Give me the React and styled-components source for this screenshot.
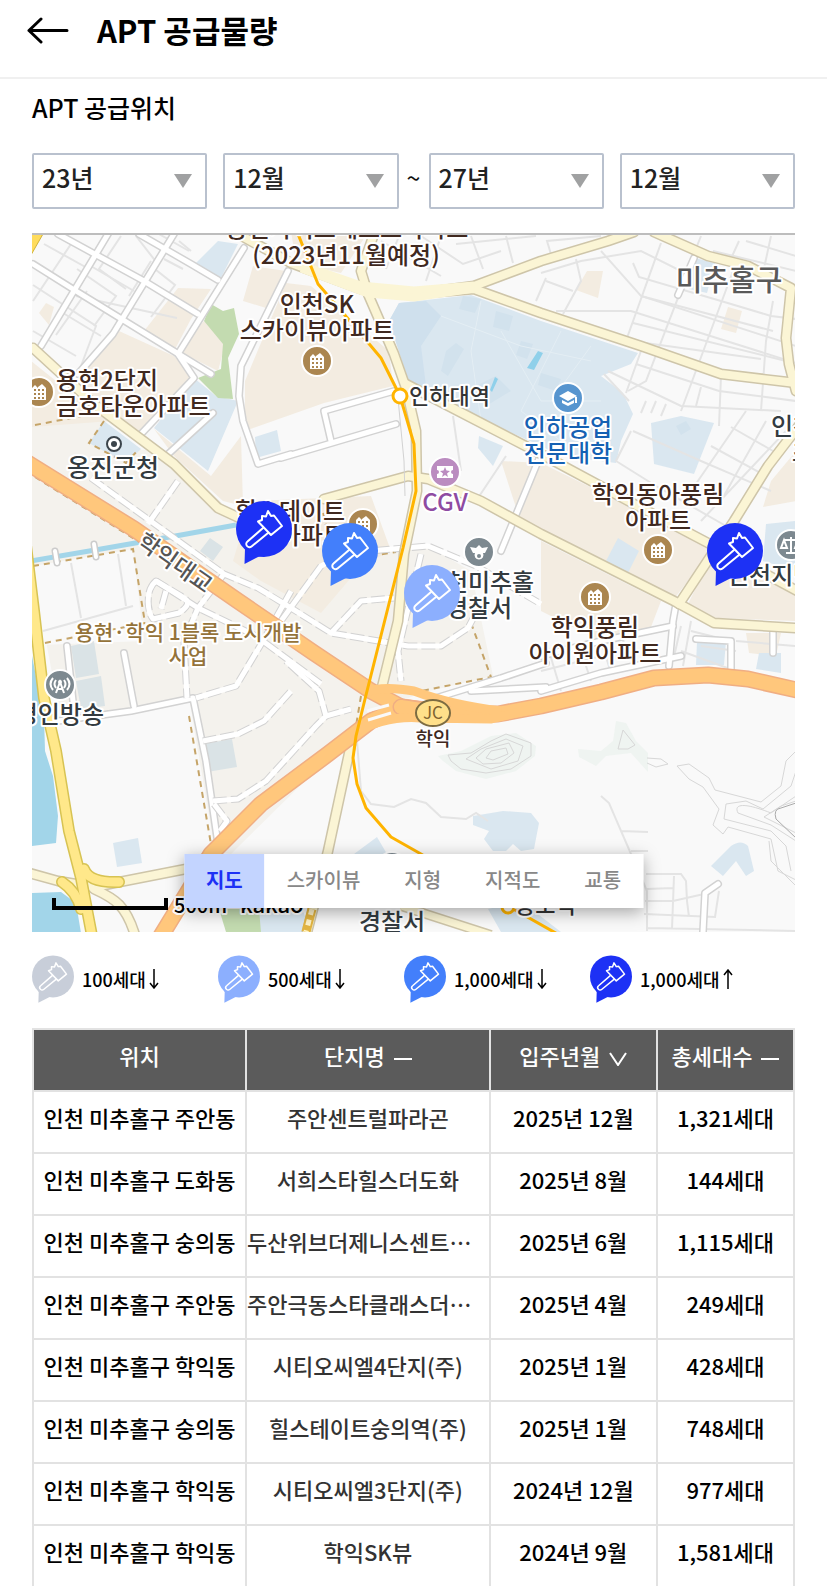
import React from "react";
import styled, { createGlobalStyle, css } from "styled-components";

const GlobalStyle = createGlobalStyle`
  *, *::before, *::after { box-sizing: border-box; }
  body {
    margin: 0;
    background: #fff;
    color: #111;
    font-family: "Noto Sans CJK KR", "Noto Sans", sans-serif;
  }
  button, select { font-family: inherit; }
`;

const Header = styled.header`
  display: flex;
  align-items: center;
  gap: 27px;
  padding: 0 27px 17px;
  height: 79px;
  border-bottom: 2px solid #f0f0f0;
`;

const BackButton = styled.button`
  display: flex;
  width: 43px;
  height: 28px;
  padding: 0;
  border: 0;
  background: none;
`;

const PageTitle = styled.h1`
  margin: 0;
  font-size: 31px;
  line-height: 58px;
  font-weight: 700;
  color: #000;
`;

const Main = styled.main`
  padding: 12px 32px 0;
`;

const SectionTitle = styled.h2`
  margin: 0 0 30px;
  font-size: 25px;
  line-height: 32px;
  font-weight: 500;
  color: #000;
`;

const Filters = styled.form`
  display: flex;
  align-items: center;
  margin-bottom: 24px;
`;

const SelectPair = styled.div`
  display: flex;
  flex: 1;
  gap: 16px;
`;

const Tilde = styled.span`
  width: 30px;
  padding-bottom: 8px;
  text-align: center;
  font-size: 25px;
  line-height: 32px;
`;

const SelectBox = styled.label`
  display: grid;
  flex: 1;
  align-items: center;

  & > * { grid-area: 1 / 1; }
  svg {
    justify-self: end;
    margin-right: 15px;
    pointer-events: none;
  }
`;

const Select = styled.select`
  appearance: none;
  width: 100%;
  height: 56px;
  padding: 0 8px 8px;
  border: 2px solid #b9c1ce;
  border-radius: 2px;
  background: #fff;
  color: #222;
  font-size: 25px;
  font-weight: 500;
`;

const MapFrame = styled.section`
  position: relative;
  aspect-ratio: 763 / 699;
  border-top: 2px solid #bdbdbd;
  overflow: hidden;
`;

const MapDrawing = styled.svg`
  display: block;
  width: 100%;
  height: 100%;
  text {
    font-family: "Noto Sans CJK KR", sans-serif;
    stroke: #fff;
    stroke-width: 4px;
    stroke-linejoin: round;
    paint-order: stroke;
  }
`;

const PinSpot = styled.button`
  position: absolute;
  left: ${(p) => ((p.$x - 31) / 763) * 100}%;
  top: ${(p) => ((p.$y - 234) / 697) * 100}%;
  margin: -28px 0 0 -28px;
  padding: 0;
  border: 0;
  background: none;
  line-height: 0;
`;

const MapTabs = styled.nav`
  position: absolute;
  left: 50%;
  bottom: 24px;
  transform: translateX(-50%);
  display: flex;
  background: #fff;
  box-shadow: 0 4px 16px rgba(0, 0, 0, 0.35);
`;

const MapTab = styled.button`
  height: 54px;
  padding: 0 22px 4px;
  border: 0;
  background: #fff;
  color: #888;
  font-size: 20px;
  font-weight: 500;
  white-space: nowrap;
  ${(p) =>
    p.$active &&
    css`
      background: #c3d4ff;
      color: #1d31f5;
      font-weight: 700;
    `}
`;

const Legend = styled.ul`
  display: grid;
  grid-template-columns: repeat(4, 186px);
  margin: 23px 0 25px;
  padding: 0;
  list-style: none;
`;

const LegendItem = styled.li`
  display: flex;
  align-items: center;
  gap: 8px;
  height: 48px;
  font-size: 18px;
  font-weight: 500;
  color: #000;
  white-space: nowrap;
`;

const LegendText = styled.span`
  display: flex;
  align-items: center;
  gap: 3px;
`;

const Table = styled.table`
  width: 100%;
  table-layout: fixed;
  border-collapse: collapse;
  font-size: 22px;
`;

const HeadCell = styled.th`
  height: 62px;
  padding: 0 0 10px;
  border: 2px solid #e2e2e2;
  background: #5b5b5b;
  color: #fff;
  font-weight: 500;
  white-space: nowrap;
  svg { margin-left: 9px; vertical-align: -1px; }
`;

const Cell = styled.td`
  height: 62px;
  padding: 0 0 10px;
  border: 2px solid #e2e2e2;
  text-align: center;
  font-weight: 500;
  color: #000;
  white-space: nowrap;
`;

const NameCell = styled(Cell)`
  color: #333;
  text-align: ${(p) => (p.$cut ? "left" : "center")};
`;

function Pin({ color, size = 56 }) {
  return (
    <svg width={size} height={size === 56 ? 63 : 48} viewBox="0 0 56 63" aria-hidden="true">
      <circle cx="28" cy="28" r="28" fill={color} />
      <path d="M9 47 L8.500 63 L26 54 Z" fill={color} />
      <g fill="none" stroke="#fff" strokeWidth="2" strokeLinejoin="round" strokeLinecap="round">
        <path d="M32 10 L35 15 L38 14.500 L46 25 L35 34 L22 20.500 L26 19 L26 15 L30 15.500 Z" />
        <path d="M27 27 L11.500 40.500 A3 3 0 0 0 15.500 45.500 L32 32" />
      </g>
    </svg>
  );
}

const ring = { stroke: "#fff", strokeWidth: 2 };

function Apartment({ x, y }) {
  return (
    <g transform={`translate(${x} ${y})`}>
      <circle r="15" fill="#ab8650" {...ring} />
      <path d="M-7 8 V-4 L-4 -7 L-1 -4 V-5 L3 -8 L7 -4 V8 Z" fill="#fff" />
      <path d="M-4 -3 V7 M0 -3 V7 M4 -3 V7" stroke="#ab8650" strokeWidth="2" strokeDasharray="2 2" />
    </g>
  );
}

function Label({ x, y, size = 24, color = "#40291f", weight = 500, anchor = "middle", children, ...rest }) {
  return (
    <text x={x} y={y} fontSize={size} fill={color} fontWeight={weight} textAnchor={anchor} {...rest}>
      {children}
    </text>
  );
}

function Roads({ lines, color, edge, width }) {
  return (
    <g fill="none" strokeLinejoin="round" strokeLinecap="round">
      <g stroke={edge} strokeWidth={width + 3}>
        {lines.map((d) => <path key={d} d={d} />)}
      </g>
      <g stroke={color} strokeWidth={width}>
        {lines.map((d) => <path key={d} d={d} />)}
      </g>
    </g>
  );
}

const streets = [
  "M32 284 L95 325 L77 373", "M43 243 L88 268 L60 312", "M32 300 L72 240", "M75 295 L176 317", "M88 264 L133 290",
  "M120 235 L98 268 L125 288", "M135 235 L156 262 L134 300", "M158 233 L188 250 M150 265 L174 284 L150 316", "M32 330 L75 355 M62 312 L100 335",
  "M95 250 L125 270 M76 268 L115 295 L93 325 M55 334 L86 290", "M178 240 L190 250 M163 258 L182 268", "M150 260 L128 295",
  "M380 240 L440 275 M398 235 L385 268 M420 235 L462 263 L500 250 M440 235 L425 280 M470 235 L482 268 M505 235 L512 262 M455 243 L535 235",
  "M540 272 L580 260 L640 250 L700 280 M552 260 L546 240 L600 235", "M545 277 L535 300 M575 258 L580 280 L562 313 M600 250 L640 295 L795 345",
  "M545 280 L572 290 M555 310 L630 310 L795 362", "M632 262 L638 276 L720 300 L770 315 L795 318", "M660 242 L626 337 M695 250 L645 380 L627 390",
  "M735 262 L680 410 M772 300 L765 340 L760 410", "M700 235 L690 260 M738 240 L728 262 M770 235 L762 272", "M712 250 L795 270 M745 240 L795 255",
  "M640 295 L772 330 M632 322 L785 360 M630 340 L760 358", "M635 363 L675 376 L718 390 L795 400", "M607 370 L680 405 L780 410 M640 350 L625 392",
  "M603 373 L628 400 M720 375 L718 425 M700 386 L695 405 M645 400 L640 412 M655 400 L650 412 M665 403 L660 415",
  "M632 430 L700 460 L770 490 M745 410 L690 490 M765 420 L720 500 M785 430 L700 520 M730 426 L772 450 M710 445 L765 475",
  "M630 430 L615 460 L655 485 L725 525", "M452 415 L460 470 M505 455 L475 500",
  "M680 625 L672 660 M690 630 L730 640 M700 645 L735 650 M690 620 L682 665 M735 640 L795 645 M680 650 L740 672",
  "M545 640 L560 690 M580 650 L590 680 M600 640 L610 672 M620 635 L633 665 M540 670 L600 655",
  "M600 795 L608 802 L646 890 L646 930 M620 830 L647 831 M630 850 L647 850 M645 873 L680 873 L685 880 L686 900 L688 916 M646 888 L672 887 M644 900 L672 900 L703 893 M643 913 L714 916 L718 890 M646 927 L795 930 M673 875 L671 928",
  "M356 740 L360 790 L370 803 L393 806 L410 798 L425 802 L440 816 L465 818 L475 812 L487 820",
];

const whiteRoads = [
  "M57 233 L143 280 L197 313", "M173 233 L112 333 L77 373", "M243 247 L177 353 L193 377 L140 433", "M32 263 L75 290 L210 373",
  "M107 233 L40 345", "M287 270 L240 365 L238 395 L242 420 L257 463 L290 453", "M280 457 L395 423", "M393 390 L323 410 L330 440", "M212 412 L165 455",
  "M138 233 L190 263 L217 279", "M540 453 L500 550", "M693 257 L677 294", "M675 603 L672 620 L668 665", "M540 690 L600 672 L680 655",
  "M540 655 L600 640 L672 625", "M695 638 L730 640 L730 668 M772 630 L772 652", "M435 697 L500 677 L545 662", "M470 690 L545 686",
  "M192 697 L130 710 L57 720 M192 697 L205 760 L218 850", "M66 645 L72 700 M123 652 L133 705", "M702 931 L704 892 L717 883",
];

const newRoads = [
  "M90 477 L223 573 L257 587 L290 607 L330 632 L407 645 L440 645 L467 627 L475 612", "M177 480 L147 523",
  "M155 580 C143 590 147 612 152 618 L178 612 C188 605 190 600 180 595 Z M165 590 L160 608", "M155 580 L197 607 L255 635 L320 683", "M223 573 L197 607 L183 640 L186 697",
  "M280 620 L320 565 L345 552 L427 545 L475 565 L540 603", "M330 632 L360 600 L393 597", "M420 553 L397 650 L400 680",
  "M202 740 L237 733 L263 720 L290 690", "M290 590 L262 640 L235 685 L195 697", "M212 800 L237 798 L265 780 L315 725 L325 715 L318 690 L285 660",
  "M325 715 L350 708", "M213 803 L226 820 L219 830",
];

const paleRoads = [
  "M32 347 L93 403 L173 463 L217 507 L245 520", "M323 498 L407 475 L427 478 L480 500 L540 533 L673 600 L713 622 L795 627",
  "M237 233 L290 262 L360 288 L413 293 L473 285 L540 260 L607 240 L633 231", "M413 293 L473 288 L540 312 L640 345 L720 373 L795 382",
  "M653 231 L707 255 L747 265 L790 287 L785 337 L788 363 L795 390", "M373 233 L360 270 L367 293 L393 353 L405 387 L415 430 L416 490 L403 553 L397 620 L380 690",
  "M405 383 L540 453 L633 503 L707 542 L800 592", "M800 422 L767 465 L733 520 L678 603", "M350 743 L327 850 L305 935",
  "M28 872 L57 880 L93 886 L190 867", "M93 888 C115 898 125 905 134 934",
];

const highways = [
  "M25 461 L133 528 L237 600 L313 652 L370 690 L400 706 L447 712",
  "M160 935 L210 853 L260 803 L327 753 L370 720 L400 706",
];
const eastHighway = ["M400 706 L447 713 L497 713 L540 705 L600 691 L653 677 L707 674 L747 678 L800 690"];

const mapTabs = ["지도", "스카이뷰", "지형", "지적도", "교통"];

const pins = [
  { x: 263, y: 528, color: "#1d31f5", name: "힐스테이트" },
  { x: 431, y: 592, color: "#8caffe", name: "미추홀경찰서 부근" },
  { x: 349, y: 550, color: "#437ffb", name: "힐스테이트 동측" },
  { x: 734, y: 550, color: "#1d31f5", name: "학익동" },
];

const legend = [
  { color: "#c8ced9", text: "100세대", up: false },
  { color: "#8caffe", text: "500세대", up: false },
  { color: "#437ffb", text: "1,000세대", up: false },
  { color: "#1d31f5", text: "1,000세대", up: true },
];

const rows = [
  ["주안동", "주안센트럴파라곤", "2025년 12월", "1,321세대"],
  ["도화동", "서희스타힐스더도화", "2025년 8월", "144세대"],
  ["숭의동", "두산위브더제니스센트…", "2025년 6월", "1,115세대"],
  ["주안동", "주안극동스타클래스더…", "2025년 4월", "249세대"],
  ["학익동", "시티오씨엘4단지(주)", "2025년 1월", "428세대"],
  ["숭의동", "힐스테이트숭의역(주)", "2025년 1월", "748세대"],
  ["학익동", "시티오씨엘3단지(주)", "2024년 12월", "977세대"],
  ["학익동", "학익SK뷰", "2024년 9월", "1,581세대"],
];

function MapPicture() {
  return (
    <MapDrawing viewBox="31 234 763 697" preserveAspectRatio="xMidYMid slice" role="img" aria-label="공급위치 지도">
      <rect x="30" y="230" width="770" height="705" fill="#f9f9f9" />
      {/* redevelopment ground */}
      <path d="M30 424 L96 412 L125 448 L165 450 L240 520 L290 545 L430 547 L470 570 L492 675 L420 692 L375 710 L230 853 L214 850 L188 697 L60 720 L30 560 Z" fill="#f4f2ed" />
      <path d="M33 565 L132 548 L143 640 L40 644 Z" fill="#f9f9f9" />
      <path d="M58 722 L188 700 L213 848 L190 870 L80 875 Z" fill="#f9f9f9" />
      {/* apartment blocks */}
      <g fill="#f3ece1">
        <path d="M118 330 L173 355 L193 377 L140 432 L93 397 L77 373 Z" />
        <path d="M30 360 L85 404 L110 420 L30 426 Z" />
        <path d="M177 287 L210 288 L190 318 L173 350 L143 330 Z" />
        <path d="M203 320 L225 340 L217 370 L177 350 Z" />
        <path d="M252 265 L285 270 L265 307 L242 300 Z M290 230 L368 230 L340 272 L295 262 Z" />
        <path d="M285 282 L310 285 L388 350 L392 385 L323 402 L244 430 L244 380 Z" />
        <path d="M38 312 L45 302 L53 306 L48 324 Z" />
        <path d="M153 428 L210 475 L240 435 L242 505 L222 500 L173 455 Z" />
        <path d="M250 500 L370 495 L390 550 L360 565 L320 612 L260 580 L232 560 Z" />
        <path d="M500 460 L540 462 L700 540 L710 550 L673 598 L520 522 Z" />
        <path d="M540 540 L660 600 L650 626 L600 640 L540 610 Z" />
        <path d="M712 552 L795 585 L795 620 L715 617 L687 603 Z" />
        <path d="M770 480 L795 450 L795 500 L762 506 Z" />
        <path d="M586 270 L602 270 L597 297 L575 289 Z M727 306 L741 310 L735 332 L720 328 Z" />
        <path d="M745 632 L780 632 L775 655 L748 652 Z" />
      </g>
      {/* public and school grounds */}
      <g fill="#dae7f0">
        <path d="M398 302 L470 294 L540 320 L637 352 L630 363 L600 375 L622 392 L632 413 L620 440 L615 462 L560 455 L540 445 L410 387 L388 320 Z" />
        <path d="M478 435 L502 445 L492 465 L477 447 Z" />
        <path d="M217 240 L237 243 L220 277 L195 262 Z" />
        <path d="M193 377 L215 395 L237 400 L207 470 L153 427 Z" />
        <path d="M103 420 L140 448 L125 462 L88 442 Z" />
        <path d="M254 436 L276 429 L280 450 L255 457 Z" />
        <path d="M650 422 L680 415 L713 422 L693 473 L653 463 Z" />
        <path d="M617 537 L638 550 L627 572 L605 560 Z" />
        <path d="M765 523 L795 520 L795 570 L762 560 Z" />
        <path d="M696 640 L725 640 L723 664 L695 664 Z M758 652 L780 652 L780 672 L755 668 Z" />
        <path d="M694 257 L714 262 L706 292 L688 288 Z" />
        <path d="M112 842 L137 837 L141 862 L116 866 Z" />
        <path d="M472 815 L502 810 L530 812 L538 822 L533 848 L520 850 L512 843 L505 850 L492 850 L483 838 L488 830 L472 824 Z" />
        <path d="M710 865 L730 845 Q740 838 747 845 L753 870 L745 875 L735 860 L722 875 Z" />
        <path d="M353 853 L376 836 L386 853 Z M258 905 L300 905 L310 931 L258 931 Z M487 908 L520 900 L560 931 L500 931 Z" />
      </g>
      <path d="M398 302 L425 300 L440 315 L420 345 L425 385 L410 387 L388 320 Z" fill="#cfe0ed" />
      <g fill="#d2e2ed">
        <path d="M445 350 L455 342 L463 348 L447 375 L440 370 Z M462 295 L480 298 L474 312 L458 308 Z M495 310 L512 315 L508 330 L492 326 Z M520 340 L532 343 L526 358 L515 354 Z M475 385 L495 375 L510 390 L485 405 Z M540 372 L560 378 L555 390 L537 384 Z M675 425 L685 420 L690 428 L680 434 Z" />
      </g>
      <g fill="none" stroke="#e4eef4" strokeWidth="1">
        <path d="M440 315 L520 345 L590 360 M480 300 L470 350 L480 420 M500 330 L540 400 L600 400 M560 330 L520 410 L560 440 M590 345 L550 400" />
      </g>
      <path d="M537 350 L542 352 L533 369 L526 367 Z M494 376 L497 378 L491 391 L489 389 Z" fill="#8fd0ea" />
      <path d="M210 303 L222 310 L233 307 L238 333 L227 357 L232 398 L217 397 L197 377 L220 368 L222 343 L203 320 Z" fill="#c3dbb0" />
      <g fill="#dae3e6">
        <path d="M209 537 L222 546 L212 560 L199 550 Z M70 645 L93 640 L98 673 L75 677 Z M75 680 L100 675 L104 705 L80 708 Z M202 743 L231 738 L236 766 L206 771 Z" />
      </g>
      <g fill="#eff4f1">
        <path d="M437 755 L460 750 L490 735 L515 732 L535 745 L534 755 L515 770 L485 778 L455 770 L442 760 Z" />
        <path d="M577 748 L600 750 L612 740 L615 720 L625 722 L635 740 L647 752 L647 771 L630 752 L605 755 L595 765 L578 756 Z" />
      </g>
      {/* water */}
      <g fill="#a2d5e9">
        <path d="M30 650 L43 715 L44 750 L52 775 L57 815 L55 842 L30 845 Z M30 892 L60 891 L75 902 L80 932 L30 932 Z" />
      </g>
      <path d="M30 560 L100 548 L180 534 L235 524" fill="none" stroke="#a2d5e9" strokeWidth="5" />
      <path d="M218 908 L258 908 L260 931 L225 931 Z" fill="#c3dbb0" />
      <g fill="none" stroke="#d7d7d7" strokeWidth="1">
        <path d="M450 760 L447 754 L470 752 L490 740 L505 733 L530 742 L530 755 L510 768 L485 772 L460 768 Z M465 758 L480 748 L505 738 L522 745 L517 760 L490 768 Z M475 757 L485 748 L508 742 L513 752 L500 762 L482 763 Z M485 757 L490 750 L505 747 L507 753 L492 759 Z" />
        <path d="M617 748 L622 729 L634 744 L627 748 Z M646 757 L660 758 L667 763 L655 766 L646 762" />
        <path d="M676 765 L688 763 L708 777 L714 789 L760 801 L780 785 L785 760 L795 750 M676 765 L688 778 L702 786 L718 808 L712 824 L722 833 L727 826 L770 838 L777 870 L795 879" />
        <path d="M723 818 L725 803 L745 800 L762 808 L790 785 L795 770 M723 818 L770 830 L785 845 L790 870 M737 812 C732 802 745 802 770 812 L795 795 M737 812 L770 824 L795 840 M763 816 L780 805 L795 800 M763 816 L795 832" />
        <path d="M768 840 L770 860 L795 885" />
        <path d="M795 837 L775 818 Q772 808 780 807 L795 802" stroke="#aaa" />
      </g>
      <g fill="none" stroke="#e4e4e4" strokeWidth="2">
        {streets.map((d) => <path key={d} d={d} />)}
        <path d="M70 562 L80 617 M117 553 L125 605 M42 630 L132 605" />
      </g>
      <g fill="none" stroke="#c5a468" strokeWidth="2" strokeDasharray="6 5">
        <path d="M32 565 L132 548 L144 622 M44 642 L144 622 M34 476 L140 542 M34 424 L96 412 M103 420 L88 442 L125 462 L138 448" />
        <path d="M188 715 L212 855 M95 712 L180 702 M470 622 L490 676 L420 690 M322 512 L330 545 M370 555 L395 551 M360 695 L355 725" />
      </g>
      <Roads lines={whiteRoads} color="#fff" edge="#d2d2d2" width={5} />
      <g fill="none" strokeLinejoin="round">
        <g stroke="#d2d2d2" strokeWidth="7" strokeDasharray="14 4">
          {newRoads.map((d) => <path key={d} d={d} />)}
        </g>
        <g stroke="#fff" strokeWidth="5">
          {newRoads.map((d) => <path key={d} d={d} />)}
        </g>
      </g>
      <Roads lines={["M54 550 L56 562", "M93 543 L95 556"]} color="#fff" edge="#ccc" width={4} />
      <Roads lines={paleRoads} color="#fbf5d5" edge="#cec5a9" width={8} />
      <path d="M270 253 L360 284 L413 289 L473 284 M300 268 L367 293 L413 297 L473 288" fill="none" stroke="#fbf5d5" strokeWidth="7" />
      <path d="M396 387 L403 460 L404 495" fill="none" stroke="#d2d2d2" strokeWidth="1" />
      <Roads lines={highways} color="#ffc77c" edge="#f0ae83" width={14} />
      <Roads lines={eastHighway} color="#ffc77c" edge="#f0ae83" width={14} />
      <path d="M363 692 Q380 684 413 690 Q450 704 500 710 M350 733 Q385 714 420 717 L490 718 L540 706" fill="none" stroke="#ffc77c" strokeWidth="9" />
      <path d="M366 710 L388 704 M367 719 L390 712" stroke="#f9f9f9" strokeWidth="3" />
      <Roads lines={["M22 520 L33 610 L43 697 L55 750 L68 830 L80 877 L91 935", "M83 868 Q88 882 118 881", "M61 881 Q75 890 80 908"]} color="#ffe88a" edge="#d7c353" width={9} />
      <path d="M30 233 L42 233 L30 254 Z" fill="#ffdc5c" stroke="#d0b33c" />
      <path d="M311 908 L305 931" stroke="#e3b541" strokeWidth="9" />
      <path d="M311 908 L305 931" stroke="#fff3c8" strokeWidth="5" strokeDasharray="6 5" />
      <path d="M400 905 L490 934" stroke="#cec5a9" strokeWidth="10" />
      <path d="M400 905 L490 934" stroke="#fbf5d5" strokeWidth="7" />
      {/* subway line */}
      <path d="M297 233 L317 283 L343 313 L380 357 L399 395 L413 443 L415 490 L402 547 L364 698 L355 735 L352 757 L356 783 L365 807 L390 836 L420 853 L507 905 L560 935" fill="none" stroke="#ffb400" strokeWidth="3" strokeLinejoin="round" />
      <circle cx="399" cy="395" r="7" fill="#fff" stroke="#ffb400" strokeWidth="3" />
      <circle cx="507" cy="906" r="6" fill="#fff" stroke="#ffb400" strokeWidth="3" />

      <Apartment x={316} y={360} />
      <Apartment x={38} y={391} />
      <Apartment x={362} y={523} />
      <Apartment x={657} y={549} />
      <Apartment x={594} y={596} />
      <g transform="translate(567 397)">
        <circle r="15" fill="#5795cf" {...ring} />
        <path d="M-9 -2 L0 -7 L9 -2 L0 3 Z M-6 2 L0 5 L6 2 V5 L0 8 L-6 5 Z M7 -1 H9 V5 H7 Z" fill="#fff" />
      </g>
      <g transform="translate(444 471)">
        <circle r="15" fill="#bb8cc0" {...ring} />
        <path d="M-8 -6 H8 V-2 A2 2 0 0 0 8 2 V6 H-8 V2 A2 2 0 0 0 -8 -2 Z" fill="#fff" />
        <path d="M0 -5 L1.500 -1.500 L5 -1 L2 1.500 L3 5 L0 3 L-3 5 L-2 1.500 L-5 -1 L-1.500 -1.500 Z" fill="#bb8cc0" />
      </g>
      <g transform="translate(478 551)">
        <circle r="15" fill="#7d8990" {...ring} />
        <path d="M-9 -5 L-3 -4 L0 -7 L3 -4 L9 -5 L6 1 H4 A4.500 4.500 0 1 1 -4 1 H-6 Z" fill="#fff" />
        <circle cy="4" r="2" fill="#7d8990" />
      </g>
      <g transform="translate(59 684)">
        <circle r="15" fill="#7d8990" {...ring} />
        <path d="M-4 8 L0 -3 L4 8 M-2 4 H2 M-4 -5 Q-7 -1 -4 3 M-7 -7 Q-12 -1 -7 5 M4 -5 Q7 -1 4 3 M7 -7 Q12 -1 7 5" stroke="#fff" strokeWidth="2" fill="none" />
        <circle cy="-3" r="2" fill="#fff" />
      </g>
      <g transform="translate(790 544)">
        <circle r="15" fill="#7d8990" {...ring} />
        <path d="M0 -8 V8 M-5 8 H5 M-7 -5 H7 M-7 -5 L-10 3 H-4 Z M7 -5 L4 3 H10 Z" stroke="#fff" strokeWidth="2" fill="none" />
      </g>
      <circle cx="391" cy="866" r="15" fill="#7d8990" {...ring} />
      <circle cx="113" cy="443" r="7" fill="#fff" stroke="#3b444b" strokeWidth="2" />
      <circle cx="113" cy="443" r="3" fill="#3b444b" />

      <Label x={346} y={236}>용현자이크레스트아파트</Label>
      <Label x={345} y={263}>(2023년11월예정)</Label>
      <Label x={316} y={312}>인천SK</Label>
      <Label x={316} y={338}>스카이뷰아파트</Label>
      <Label x={55} y={388} anchor="start">용현2단지</Label>
      <Label x={55} y={414} anchor="start">금호타운아파트</Label>
      <Label x={112} y={476} size={25} color="#333b40">옹진군청</Label>
      <Label x={408} y={403} size={22} color="#333" anchor="start">인하대역</Label>
      <Label x={567} y={435} color="#1561b3">인하공업</Label>
      <Label x={567} y={461} color="#1561b3">전문대학</Label>
      <Label x={728} y={290} size={29} color="#595959">미추홀구</Label>
      <Label x={444} y={510} color="#8e4ba2">CGV</Label>
      <Label x={657} y={502}>학익동아풍림</Label>
      <Label x={657} y={528}>아파트</Label>
      <Label x={594} y={635}>학익풍림</Label>
      <Label x={594} y={661}>아이원아파트</Label>
      <Label x={770} y={434} color="#333b40" anchor="start">인천</Label>
      <Label x={791} y={460} color="#333b40" anchor="start">초</Label>
      <Label x={726} y={583} color="#333b40" anchor="start">인천지방법원</Label>
      <Label x={478} y={590} color="#333b40">인천미추홀</Label>
      <Label x={478} y={616} color="#333b40">경찰서</Label>
      <Label x={289} y={519}>힐스테이트</Label>
      <Label x={344} y={543} anchor="end">아파트</Label>
      <Label x={187} y={639} size={21} color="#94733a">용현·학익 1블록 도시개발</Label>
      <Label x={187} y={663} size={21} color="#94733a">사업</Label>
      <Label x={103} y={722} color="#333b40" anchor="end">경인방송</Label>
      <Label x={174} y={570} size={23} color="#555" transform="rotate(35 174 562)">학익대교</Label>
      <ellipse cx="432" cy="712" rx="17" ry="13" fill="#ffe08a" stroke="#7d6c42" strokeWidth="2" />
      <text x="432" y="718" fontSize="17" fill="#7d6330" textAnchor="middle" style={{ stroke: "none" }}>JC</text>
      <Label x={432} y={745} size={19}>학익</Label>
      <Label x={391} y={930} color="#333b40">경찰서</Label>
      <Label x={514} y={912} size={22} color="#333" anchor="start">송도역</Label>
      <path d="M53 897 V907 H165 V897" fill="none" stroke="#000" strokeWidth="4" />
      <Label x={173} y={912} size={20} color="#000" anchor="start">500m</Label>
      <Label x={239} y={912} size={22} color="#000" anchor="start">kakao</Label>
    </MapDrawing>
  );
}

function YearMonthSelect({ label, value }) {
  return (
    <SelectBox>
      <Select aria-label={label} defaultValue={value}>
        <option>{value}</option>
      </Select>
      <svg width="18" height="14" viewBox="0 0 18 14" aria-hidden="true">
        <path d="M0 0 H18 L9 14 Z" fill="#a0a1a2" />
      </svg>
    </SelectBox>
  );
}

function SortMark({ open }) {
  return (
    <svg width="18" height="14" viewBox="0 0 18 14" aria-hidden="true">
      <path d={open ? "M1 1 L9 13 L17 1" : "M0 7 H18"} fill="none" stroke="#fff" strokeWidth="2" />
    </svg>
  );
}

export default function App() {
  return (
    <>
      <GlobalStyle />
      <Header>
        <BackButton aria-label="뒤로">
          <svg width="43" height="28" viewBox="0 0 43 28" aria-hidden="true">
            <path d="M14 3 L2 14.500 L14 26 M2 14.500 H40" fill="none" stroke="#000" strokeWidth="3" strokeLinecap="round" strokeLinejoin="round" />
          </svg>
        </BackButton>
        <PageTitle>APT 공급물량</PageTitle>
      </Header>
      <Main>
        <SectionTitle>APT 공급위치</SectionTitle>
        <Filters>
          <SelectPair>
            <YearMonthSelect label="시작 연도" value="23년" />
            <YearMonthSelect label="시작 월" value="12월" />
          </SelectPair>
          <Tilde>~</Tilde>
          <SelectPair>
            <YearMonthSelect label="종료 연도" value="27년" />
            <YearMonthSelect label="종료 월" value="12월" />
          </SelectPair>
        </Filters>
        <MapFrame>
          <MapPicture />
          {pins.map((pin) => (
            <PinSpot key={pin.name} $x={pin.x} $y={pin.y} aria-label={pin.name}>
              <Pin color={pin.color} />
            </PinSpot>
          ))}
          <MapTabs>
            {mapTabs.map((name, i) => (
              <MapTab key={name} $active={i === 0}>{name}</MapTab>
            ))}
          </MapTabs>
        </MapFrame>
        <Legend>
          {legend.map((item) => (
            <LegendItem key={item.color}>
              <Pin color={item.color} size={42} />
              <LegendText>
                {item.text}
                <svg width="10" height="20" viewBox="0 0 10 20" aria-hidden="true">
                  <path d={item.up ? "M5 20 V2 M1 6 L5 1 L9 6" : "M5 0 V18 M1 14 L5 19 L9 14"} fill="none" stroke="#000" strokeWidth="1.5" />
                </svg>
              </LegendText>
            </LegendItem>
          ))}
        </Legend>
        <Table>
          <colgroup>
            <col width="28%" />
            <col width="32%" />
            <col width="22%" />
            <col width="18%" />
          </colgroup>
          <thead>
            <tr>
              <HeadCell scope="col">위치</HeadCell>
              <HeadCell scope="col">단지명<SortMark /></HeadCell>
              <HeadCell scope="col">입주년월<SortMark open /></HeadCell>
              <HeadCell scope="col">총세대수<SortMark /></HeadCell>
            </tr>
          </thead>
          <tbody>
            {rows.map(([dong, name, date, count]) => (
              <tr key={name}>
                <Cell>인천 미추홀구 {dong}</Cell>
                <NameCell $cut={name.endsWith("…")}>{name}</NameCell>
                <Cell>{date}</Cell>
                <Cell>{count}</Cell>
              </tr>
            ))}
          </tbody>
        </Table>
      </Main>
    </>
  );
}
